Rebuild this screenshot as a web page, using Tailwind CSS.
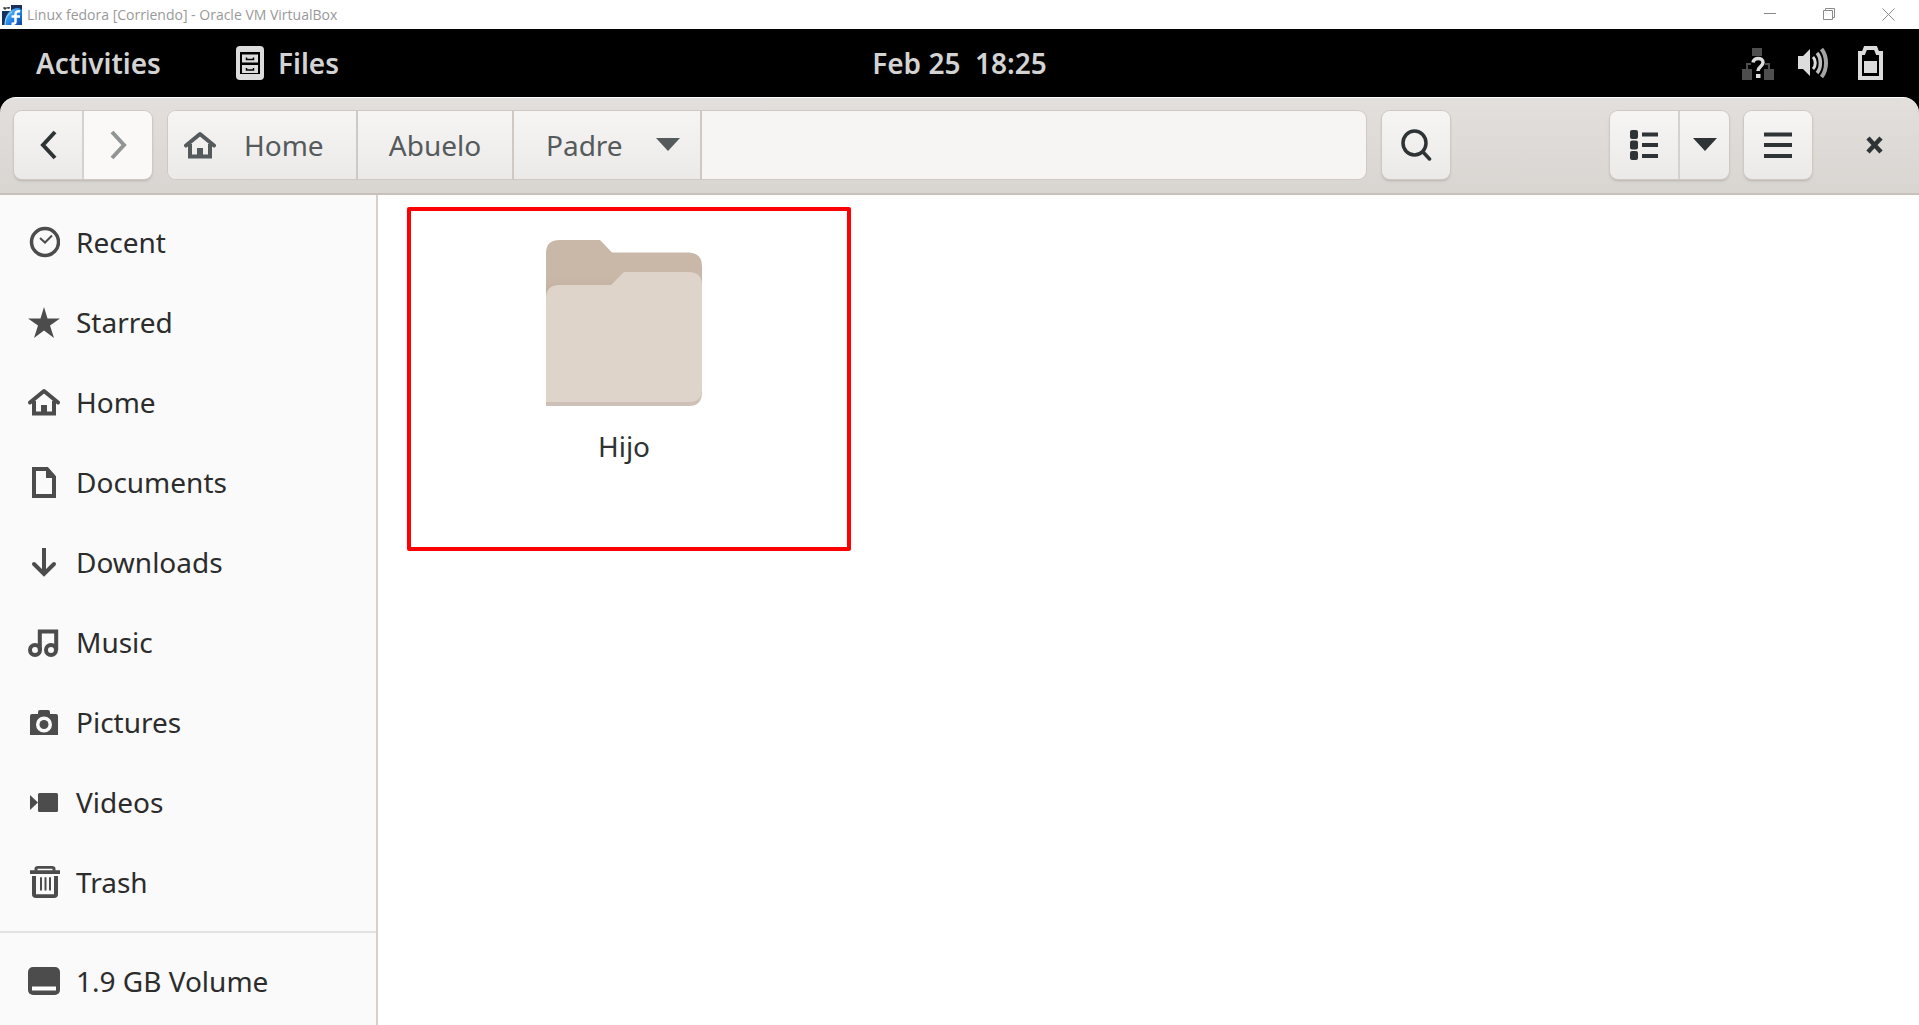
<!DOCTYPE html>
<html lang="en">
<head>
<meta charset="utf-8">
<title>Linux fedora [Corriendo] - Oracle VM VirtualBox</title>
<script src="https://cdn.jsdelivr.net/npm/@tailwindcss/browser@4"></script>
</head>
<body class="flex h-screen flex-col overflow-hidden bg-black font-['Noto_Sans',sans-serif] text-[28px] leading-9">

<svg class="hidden">
  <symbol id="home" viewBox="0 0 32 32"><path d="M6 15v12.500h20V15" fill="none" stroke="currentColor" stroke-width="4"/><path d="M2 16.500 16 5l14 11.500" fill="none" stroke="currentColor" stroke-width="4" stroke-linecap="round" stroke-linejoin="round"/><path d="M13 19h6v9h-6z" fill="currentColor"/></symbol>
  <symbol id="down" viewBox="0 0 24 13"><path d="M0 0h24L12 13z" fill="currentColor"/></symbol>
</svg>

<!-- Host window title bar -->
<div class="flex h-[29px] shrink-0 items-center bg-white pr-6 pl-[2px] text-[#999]">
  <svg class="size-5" viewBox="0 0 20 20">
    <defs><linearGradient id="fed" x1="0" y1="0" x2="1" y2="1"><stop offset="0" stop-color="#8fd6ff"/><stop offset=".45" stop-color="#2f93ee"/><stop offset="1" stop-color="#0b3fa8"/></linearGradient></defs>
    <rect width="20" height="20" fill="#17305c"/>
    <path d="M3 20C2 10 8 3 17 3l3 2v15z" fill="url(#fed)"/>
    <path d="M3 20c0-7 3-11 7-13" stroke="#a8e0ff" fill="none"/>
    <path d="M18 6.500c-3-1-4.500.5-4.500 3V17c0 1.500-2 2-4 1.500M9.500 11.500H18" stroke="#fff" stroke-width="2.500" fill="none"/>
    <path d="M0 0h9v6H0z" fill="#fff"/><path d="M2 2v2h2V3H2m3-1v1h2V2v2" stroke="#222" fill="none"/>
  </svg>
  <h1 class="ml-[5px] font-['Open_Sans',sans-serif] text-sm leading-5">Linux fedora [Corriendo] - Oracle VM VirtualBox</h1>
  <div class="ml-auto flex gap-[46px]">
    <button aria-label="Minimize"><svg class="size-[13px]" viewBox="0 0 13 13"><path d="M0 5.500h12" stroke="#8a8a8a"/></svg></button>
    <button aria-label="Restore"><svg class="size-[13px]" viewBox="0 0 13 13" fill="none" stroke="#8a8a8a"><path d="M.5 2.500h9v9h-9zM2.500 2.500v-2h9v9h-2"/></svg></button>
    <button aria-label="Close virtual machine"><svg class="size-[13px]" viewBox="0 0 13 13"><path d="m.5.5 12 12m0-12-12 12" stroke="#8a8a8a"/></svg></button>
  </div>
</div>

<!-- GNOME top bar -->
<div class="grid h-[68px] shrink-0 grid-cols-[1fr_auto_1fr] items-center bg-black px-9 pb-px font-semibold text-[#d3d3d3]">
  <div class="flex items-center">
    <button>Activities</button>
    <button class="ml-[75px] flex items-center gap-[14px]">
      <svg class="h-[34px] w-7" viewBox="0 0 28 34"><rect width="28" height="34" rx="4" fill="#dcdcdc"/><path d="M4 6h20v22H4z" fill="#000"/><path d="M6 8.500h16v8H6zM6 19h16v8H6z" fill="#dcdcdc"/><path d="M10.500 11.500v2h7v-2M10.500 22v2h7v-2" fill="none" stroke="#000" stroke-width="1.500"/></svg>
      Files
    </button>
  </div>
  <button class="whitespace-pre">Feb 25  18:25</button>
  <div class="flex items-center justify-end">
    <svg class="mt-[2px] size-8" viewBox="0 0 32 32"><path d="M10 0h10v8H10zM0 21h10v11H0zM22 21h10v11H22z" fill="#4e4e4e"/><path d="M5 21v-5h4M23 16h4v5" fill="none" stroke="#4e4e4e" stroke-width="2"/><path d="M11 14.500c.5-5.500 10-5.500 10 0 0 4-5 4-5 8.500" fill="none" stroke="#dcdcdc" stroke-width="3.500"/><path d="M14 26h4.500v4H14z" fill="#dcdcdc"/></svg>
    <svg class="ml-6 h-8 w-[30px]" viewBox="0 0 30 32"><path d="M0 9h5l7-7v27l-7-7H0z" fill="#dcdcdc"/><path d="M15 10c3 3 3 9 0 12" fill="none" stroke="#dcdcdc" stroke-width="3"/><path d="M19 6c4.500 5 4.500 15 0 20" fill="none" stroke="#bdbdbd" stroke-width="3.500"/><path d="M23.500 2c6 7.500 6 20.500 0 28" fill="none" stroke="#a5a5a5" stroke-width="4"/></svg>
    <svg class="ml-[30px] h-[34px] w-[25px]" viewBox="0 0 25 34"><path d="M2 32V7h3.500l2-5h10l2 5H23v25z" fill="none" stroke="#dcdcdc" stroke-width="4"/><path d="M6 15h13v12H6z" fill="#dcdcdc"/></svg>
  </div>
</div>

<!-- Files header bar -->
<header class="flex h-[98px] shrink-0 items-center rounded-t-2xl border-t border-b-2 border-t-white border-b-[#c8c0b9] bg-linear-to-b from-[#e2dfdc] to-[#d9d6d2] pr-[11px] pb-[2px] pl-[14px] text-[#2e3436]">
  <div class="flex h-[68px] w-[138px] overflow-hidden rounded-lg shadow-[0_0_0_1px_#d0c9c3,0_2px_3px_#b9b2ab]">
    <button aria-label="Back" class="flex flex-1 items-center justify-center border-r-2 border-[#d6d1cd] bg-linear-to-b from-[#f6f5f4] to-[#ebeae9]"><svg class="h-[30px] w-[17px]" viewBox="0 0 17 30"><path d="M15 2 3 15l12 13" fill="none" stroke="currentColor" stroke-width="4"/></svg></button>
    <button aria-label="Forward" class="flex flex-1 items-center justify-center bg-[#faf9f8] text-[#929595]"><svg class="h-[30px] w-[17px]" viewBox="0 0 17 30"><path d="m2 2 12 13L2 28" fill="none" stroke="currentColor" stroke-width="4"/></svg></button>
  </div>

  <nav aria-label="Path" class="ml-4 flex h-[68px] flex-1 overflow-hidden rounded-lg bg-[#f6f5f4] text-[#555b5c] shadow-[0_0_0_1px_#d0c9c3]">
    <button class="flex w-[190px] items-center gap-[28px] border-r-2 border-[#d0c9c3] bg-linear-to-b from-[#f6f5f4] to-[#ebeae9] pl-4"><svg class="size-8"><use href="#home"/></svg>Home</button>
    <button class="w-[156px] border-r-2 border-[#d0c9c3] bg-linear-to-b from-[#f6f5f4] to-[#ebeae9]">Abuelo</button>
    <button class="flex w-[188px] items-center justify-between border-r-2 border-[#d0c9c3] bg-linear-to-b from-[#f6f5f4] to-[#ebeae9] pr-5 pl-8">Padre<svg class="h-[13px] w-6"><use href="#down"/></svg></button>
  </nav>

  <button aria-label="Search" class="ml-4 flex h-[68px] w-[68px] items-center justify-center rounded-lg bg-linear-to-b from-[#f6f5f4] to-[#ebeae9] shadow-[0_0_0_1px_#d0c9c3,0_2px_3px_#b9b2ab]"><svg class="h-8 w-[31px]" viewBox="0 0 31 32"><ellipse cx="13.500" cy="14" rx="11.500" ry="12" fill="none" stroke="currentColor" stroke-width="3.500"/><path d="m22 23 6.500 7" stroke="currentColor" stroke-width="3.500" stroke-linecap="round"/></svg></button>

  <div class="ml-40 flex h-[68px] w-[119px] overflow-hidden rounded-lg shadow-[0_0_0_1px_#d0c9c3,0_2px_3px_#b9b2ab]">
    <button aria-label="List view" class="flex w-[70px] items-center justify-center border-r-2 border-[#d6d1cd] bg-linear-to-b from-[#f6f5f4] to-[#ebeae9]"><svg class="h-[30px] w-7" viewBox="0 0 28 30" fill="currentColor"><rect width="8" height="9" rx="2"/><rect y="10.500" width="8" height="9" rx="2"/><rect y="21" width="8" height="9" rx="2"/><path d="M12 2.500h16v4H12zM12 13h16v4H12zM12 24h16v4H12z"/></svg></button>
    <button aria-label="View options" class="flex flex-1 items-center justify-center bg-linear-to-b from-[#f6f5f4] to-[#ebeae9]"><svg class="h-[13px] w-6"><use href="#down"/></svg></button>
  </div>

  <button aria-label="Menu" class="ml-[15px] flex h-[68px] w-[68px] items-center justify-center rounded-lg bg-linear-to-b from-[#f6f5f4] to-[#ebeae9] shadow-[0_0_0_1px_#d0c9c3,0_2px_3px_#b9b2ab]"><svg class="h-[30px] w-7" viewBox="0 0 28 30" fill="currentColor"><path d="M0 2.500h28v4H0zM0 13h28v4H0zM0 24h28v4H0z"/></svg></button>
  <button aria-label="Close" class="ml-7 flex h-[68px] w-[68px] items-center justify-center"><svg class="h-[18px] w-[17px]" viewBox="0 0 17 18"><path d="m2 2 13 14M15 2 2 16" stroke="currentColor" stroke-width="4.500"/></svg></button>
</header>

<div class="flex min-h-0 flex-1">
  <!-- Places sidebar -->
  <aside class="w-[378px] shrink-0 overflow-hidden border-r-2 border-[#d6d1cd] bg-[#fafafa] pt-[7px] text-[#2c2c2c]">
    <ul class="[&_a]:flex [&_a]:h-20 [&_a]:items-center [&_a]:gap-4 [&_a]:pl-7 [&_svg]:size-8 [&_svg]:text-[#4c4c4c]">
      <li><a href="#"><svg viewBox="0 0 32 32" fill="none" stroke="currentColor"><circle cx="17" cy="16" r="13.500" stroke-width="3.500"/><path d="m12 12 5 4.500 7-7" stroke-width="2"/></svg>Recent</a></li>
      <li><a href="#"><svg viewBox="0 0 32 32" fill="currentColor"><path d="m16 1 3.500 11.500H32l-10 7L26 32l-10-7.500L6 32l4-12.500-10-7h12.500z"/></svg>Starred</a></li>
      <li><a href="#"><svg><use href="#home"/></svg>Home</a></li>
      <li><a href="#"><svg viewBox="0 0 32 32"><path d="M6 3h13l7 8v19H6z" fill="none" stroke="currentColor" stroke-width="4"/><path d="M18 2v10h9z" fill="currentColor"/></svg>Documents</a></li>
      <li><a href="#"><svg viewBox="0 0 32 32" fill="none" stroke="currentColor" stroke-width="4"><path d="M16 2v26"/><path d="m6 18 10 10 10-10" stroke-linecap="round"/></svg>Downloads</a></li>
      <li><a href="#"><svg viewBox="0 0 32 32" fill="none" stroke="currentColor" stroke-width="4"><circle cx="7" cy="24" r="5"/><circle cx="23" cy="24" r="5"/><path d="M11.800 24V5.500h16.400V24"/></svg>Music</a></li>
      <li><a href="#"><svg viewBox="0 0 32 32"><path fill-rule="evenodd" fill="currentColor" d="M4 8h6V6q0-2 2-2h8q2 0 2 2v2h6q2 0 2 2v19H2V10q0-2 2-2m12 2.500a8 8 0 1 0 0 16 8 8 0 0 0 0-16"/><circle cx="16" cy="18.500" r="4.500" fill="currentColor"/></svg>Pictures</a></li>
      <li><a href="#"><svg viewBox="0 0 32 32" fill="currentColor"><rect x="10" y="7" width="20" height="19" rx="1.500"/><path d="m2 9 8 7.500L2 24z"/></svg>Videos</a></li>
      <li><a href="#"><svg viewBox="0 0 32 34" preserveAspectRatio="none" fill="none" stroke="currentColor"><path d="M2 6.500h30" stroke-width="4"/><path d="M8 5V3q0-1.500 2-1.500h14q2 0 2 1.500v2" stroke-width="3"/><path d="M6 10.500V30q0 2 2 2h18q2 0 2-2V10.500" stroke-width="4"/><path d="M13 12v14M17.500 12v14M22 12v14" stroke-width="2"/></svg>Trash</a></li>
      <li class="mt-[9px] border-t-2 border-[#e2e2e2] pt-2"><a href="#"><svg viewBox="0 0 32 32"><rect y="2" width="32" height="28" rx="5" fill="currentColor"/><path d="M4 21.500h24v4H4z" fill="#fff"/></svg>1.9 GB Volume</a></li>
    </ul>
  </aside>

  <!-- Folder contents -->
  <main class="flex flex-1 items-start bg-white pt-3 pl-[29px]">
    <a href="#" class="flex h-[344px] w-[444px] flex-col items-center rounded-xs border-4 border-[#ff0000] pt-[29px] pr-[10px] text-[#303233]">
      <svg class="h-[167px] w-[156px]" viewBox="0 0 156 167">
        <defs><linearGradient id="back" x1="0" y1="0" x2="0" y2="1"><stop offset=".6" stop-color="#c9b8a8"/><stop offset="1" stop-color="#bfae9d"/></linearGradient></defs>
        <path d="M0 60V13Q0 0 14 0h40l12 12.500h76q14 0 14 14V60z" fill="url(#back)"/>
        <path d="M0 166V58q0-12 14-12h51l13-13h64q14 0 14 13v106q0 14-13 14z" fill="#cdc0b6"/>
        <path d="M0 162V58q0-13 14-13h51l13-13h64q14 0 14 13v104q0 13-13 13z" fill="#ded4ca"/>
      </svg>
      <span class="mt-[21px]">Hijo</span>
    </a>
  </main>
</div>
</body>
</html>
